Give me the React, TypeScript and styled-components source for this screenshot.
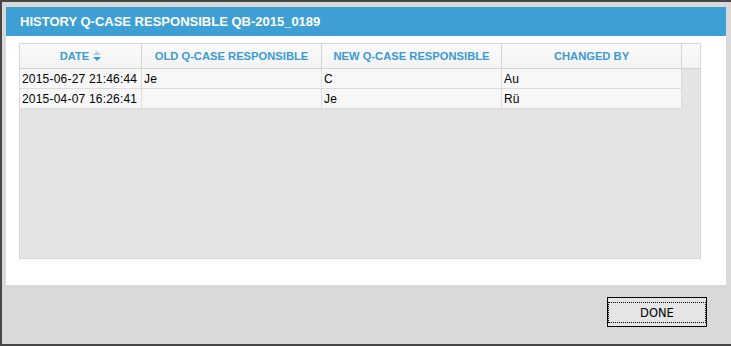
import React from "react";
import styled, { createGlobalStyle } from "styled-components";

type Change = {
  date: string;
  oldResp: string;
  newResp: string;
  changedBy: string;
};

const rows: Change[] = [
  { date: "2015-06-27 21:46:44", oldResp: "Je", newResp: "C", changedBy: "Au" },
  { date: "2015-04-07 16:26:41", oldResp: "", newResp: "Je", changedBy: "Rü" },
];

const columns = ["OLD Q-CASE RESPONSIBLE", "NEW Q-CASE RESPONSIBLE", "CHANGED BY"];

const GlobalStyle = createGlobalStyle`
  html, body {
    margin: 0;
    padding: 0;
    background: #474747;
    overflow: hidden;
  }
  body {
    font-family: "Liberation Sans", Arial, sans-serif;
  }
`;

const Window = styled.div`
  margin: 2px 0 0 2px;
  height: 342px;
  background: #d9d9d9;
  padding: 5px 0 0 4px;
  box-sizing: border-box;
  display: flex;
  flex-direction: column;
`;

const Dialog = styled.div`
  width: 720px;
  height: 278px;
  background: #fff;
  display: flex;
  flex-direction: column;
`;

const TitleBar = styled.div`
  height: 29px;
  background: #3d9fd3;
  color: #fff;
  font-weight: bold;
  font-size: 13px;
  display: flex;
  align-items: center;
  padding-left: 14px;
`;

const Body = styled.div`
  padding: 7px 0 0 13px;
`;

const Grid = styled.div`
  width: 680px;
  height: 214px;
  border: 1px solid #d8d8d8;
  background: #e4e4e4;
`;

const HeaderRow = styled.div`
  display: grid;
  grid-template-columns: 122px 180px 180px 180px 18px;
  height: 25px;
  box-sizing: border-box;
  border-bottom: 1px solid #d2d2d2;
  background: linear-gradient(#fafafa, #f3f3f3);
`;

const HeaderCell = styled.div`
  border-right: 1px solid #d4d4d4;
  color: #3a9ad6;
  font-weight: bold;
  font-size: 11.2px;
  display: flex;
  align-items: center;
  justify-content: center;
  gap: 4px;
  &:last-child {
    border-right: none;
  }
`;

const Row = styled.div`
  display: grid;
  grid-template-columns: 122px 180px 180px 180px;
  width: 662px;
  height: 20px;
`;

const Cell = styled.div`
  box-sizing: border-box;
  background: #f7f7f7;
  border-right: 1px solid #dcdcdc;
  border-bottom: 1px solid #dcdcdc;
  color: #000;
  font-size: 12px;
  letter-spacing: 0.2px;
  padding: 0 0 0 2px;
  display: flex;
  align-items: center;
  white-space: nowrap;
  overflow: hidden;
`;

const Footer = styled.div`
  flex: 1;
  display: flex;
  justify-content: flex-end;
  align-items: flex-start;
  padding: 12px 24px 0 0;
  width: 725px;
  box-sizing: border-box;
`;

const Button = styled.button`
  width: 100px;
  height: 30px;
  padding: 0;
  border: 1px solid #000;
  background: #e5e5e5;
  font-family: Tahoma, "DejaVu Sans", "Liberation Sans", sans-serif;
  font-size: 11.5px;
  color: #000;
  display: flex;
  cursor: pointer;
`;

const FocusRing = styled.span`
  flex: 1;
  margin: 4px 0 3px 0;
  border: 1px dotted #000;
  display: flex;
  align-items: center;
  justify-content: center;
`;

const SortIcon = () => (
  <svg width="8" height="10" viewBox="0 0 8 10">
    <path d="M0 4 L4 0 L8 4 Z" fill="#a9cfea" />
    <path d="M0 6 L4 10 L8 6 Z" fill="#3a9ad6" />
  </svg>
);

export default function App() {
  return (
    <>
      <GlobalStyle />
      <Window>
        <Dialog>
          <TitleBar>HISTORY Q-CASE RESPONSIBLE QB-2015_0189</TitleBar>
          <Body>
            <Grid>
              <HeaderRow>
                <HeaderCell>
                  DATE <SortIcon />
                </HeaderCell>
                {columns.map((c) => (
                  <HeaderCell key={c}>{c}</HeaderCell>
                ))}
                <HeaderCell />
              </HeaderRow>
              {rows.map((r) => (
                <Row key={r.date}>
                  <Cell>{r.date}</Cell>
                  <Cell>{r.oldResp}</Cell>
                  <Cell>{r.newResp}</Cell>
                  <Cell>{r.changedBy}</Cell>
                </Row>
              ))}
            </Grid>
          </Body>
        </Dialog>
        <Footer>
          <Button>
            <FocusRing>DONE</FocusRing>
          </Button>
        </Footer>
      </Window>
    </>
  );
}
